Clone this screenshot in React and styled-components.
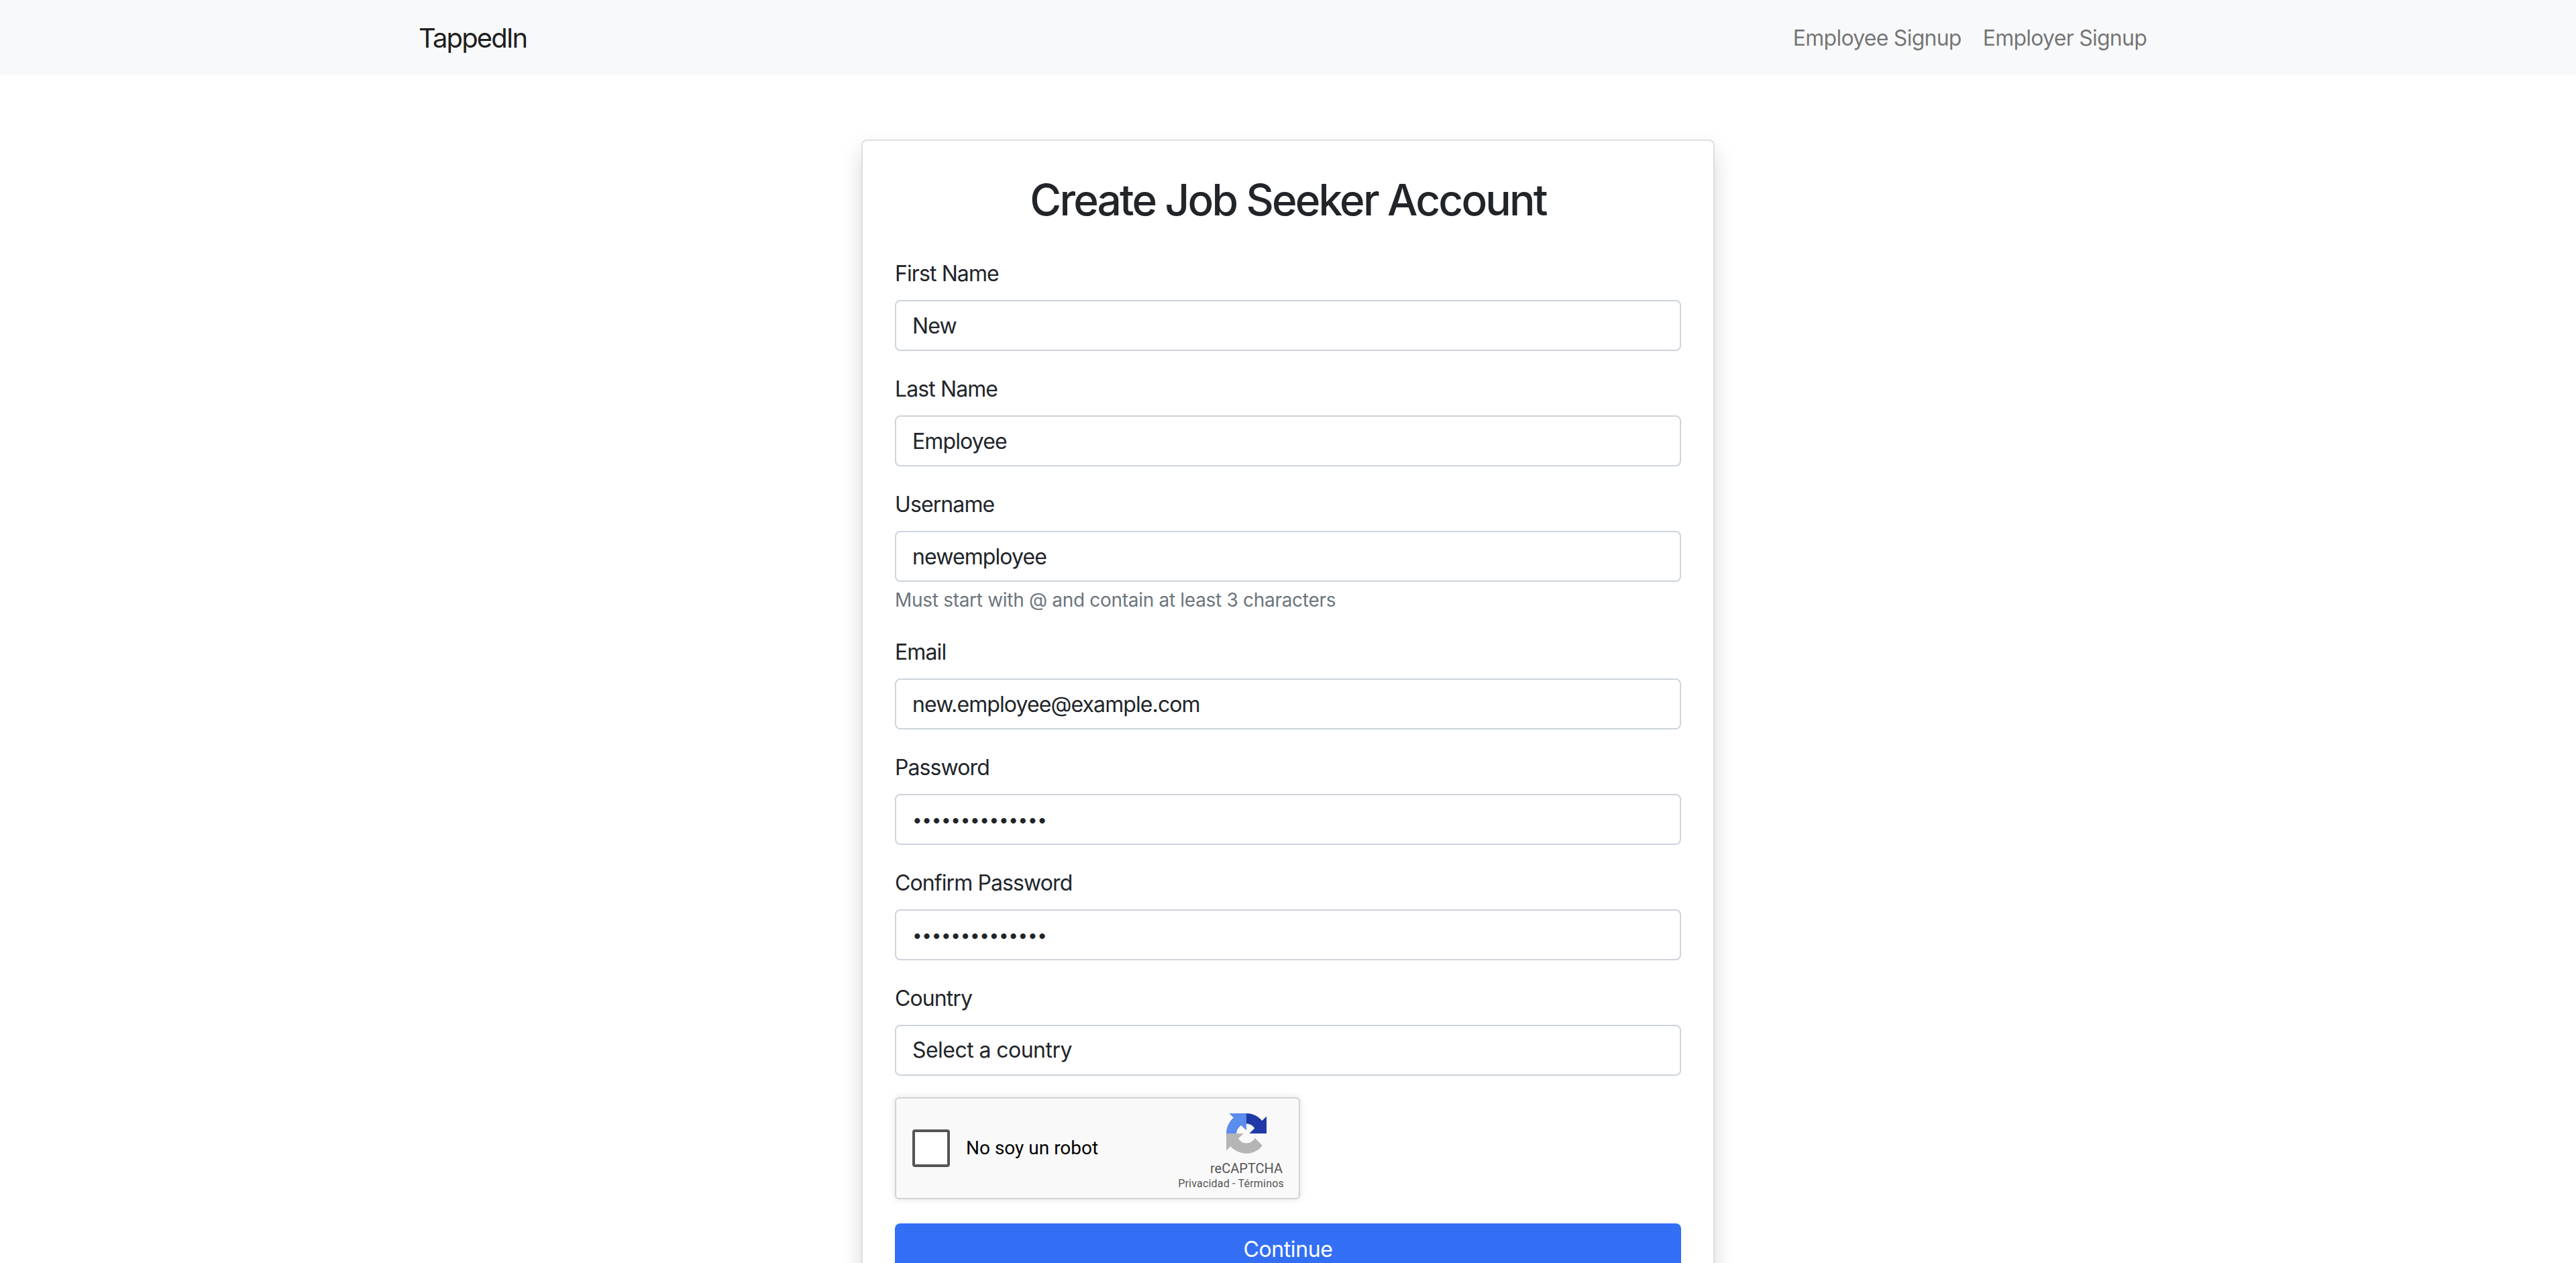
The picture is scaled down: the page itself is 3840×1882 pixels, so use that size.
import styled, { createGlobalStyle } from "styled-components";

const GlobalStyle = createGlobalStyle`
  * {
    box-sizing: border-box;
  }
  html,
  body {
    margin: 0;
    height: 1882px;
    overflow: hidden;
    background: #fff;
    color: #212529;
    font-family: Inter, "Liberation Sans", sans-serif;
    font-size: 32px;
    line-height: 1.5;
    letter-spacing: -0.9px;
  }
`;

const Navbar = styled.nav`
  background: #f8f9fa;
  padding: 16px 0;
`;

const NavContainer = styled.div`
  width: 2640px;
  margin: 0 auto;
  padding: 0 24px;
  display: flex;
  align-items: center;
  justify-content: space-between;
`;

const Brand = styled.a`
  font-size: 40px;
  padding: 11px 0 9px;
  color: rgba(0, 0, 0, 0.9);
  letter-spacing: -1.9px;
`;

const NavLinks = styled.div`
  display: flex;
`;

const NavLink = styled.a`
  padding: 17px 16px 15px;
  color: rgba(0, 0, 0, 0.55);
  letter-spacing: -0.75px;
`;

const Main = styled.main`
  display: flex;
  justify-content: center;
  padding-top: 96px;
`;

const Card = styled.div`
  width: 1272px;
  padding: 48px;
  background: #fff;
  border: 2px solid rgba(0, 0, 0, 0.125);
  border-radius: 8px;
  box-shadow: 0 16px 32px rgba(0, 0, 0, 0.15);
`;

const Title = styled.h2`
  margin: 0 0 48px;
  padding-top: 2px;
  height: 77px;
  font-size: 64px;
  font-weight: 500;
  line-height: 1.2;
  text-align: center;
  letter-spacing: -2.8px;
`;

const Field = styled.div`
  margin-bottom: 32px;
`;

const Label = styled.label`
  display: block;
  margin-bottom: 16px;
  padding-top: 1px;
  height: 48px;
`;

const Input = styled.input`
  display: block;
  width: 100%;
  height: 76px;
  padding: 12px 24px;
  font: inherit;
  letter-spacing: inherit;
  color: #212529;
  background: #fff;
  border: 2px solid #ced4da;
  border-radius: 8px;
  outline: none;

  &[type="password"] {
    font-size: 26px;
    letter-spacing: -0.3px;
  }
`;

const Select = styled(Input).attrs({ as: "select" })`
  appearance: none;
  letter-spacing: -0.55px;
`;

const Hint = styled.div`
  margin-top: 6px;
  font-size: 28px;
  line-height: 42px;
  letter-spacing: -0.3px;
  color: #6c757d;
`;

const Captcha = styled.div`
  display: flex;
  align-items: center;
  justify-content: space-between;
  width: 604px;
  height: 152px;
  margin-bottom: 36px;
  padding: 0 22px 0 24px;
  background: #f9f9f9;
  border: 2px solid #d3d3d3;
  border-radius: 6px;
  box-shadow: 0 0 8px 2px rgba(0, 0, 0, 0.08);
  font-family: Roboto, sans-serif;
  letter-spacing: 0;
`;

const CaptchaCheck = styled.div`
  display: flex;
  align-items: center;
  gap: 24px;
  font-size: 28px;
  color: #000;
`;

const CheckBox = styled.span`
  width: 56px;
  height: 56px;
  background: #fff;
  border: 4px solid #555;
  border-radius: 4px;
`;

const CaptchaBrand = styled.div`
  display: flex;
  flex-direction: column;
  align-items: flex-end;
  padding-top: 10px;
  color: #555;
`;

const LogoBlock = styled.div`
  display: flex;
  flex-direction: column;
  align-items: center;
  margin-right: 2px;
  font-size: 20px;
  line-height: 26px;
`;

const CaptchaLogo = styled.svg`
  display: block;
  width: 60px;
  height: 60px;
  margin-bottom: 9px;
`;

const CaptchaLinks = styled.div`
  font-size: 16px;
  line-height: 20px;
  letter-spacing: 0.2px;
`;

const Button = styled.button`
  display: block;
  width: 100%;
  height: 76px;
  padding: 13px 24px 11px;
  font: inherit;
  letter-spacing: -0.4px;
  color: #fff;
  background: #336ff5;
  border: none;
  border-radius: 8px;
`;

const fields = [
  { label: "First Name", value: "New" },
  { label: "Last Name", value: "Employee" },
  {
    label: "Username",
    value: "newemployee",
    hint: "Must start with @ and contain at least 3 characters",
  },
  { label: "Email", value: "new.employee@example.com" },
  { label: "Password", value: "password123456", type: "password" },
  { label: "Confirm Password", value: "password123456", type: "password" },
];

const App = () => {
  return (
    <>
      <GlobalStyle />
      <Navbar>
        <NavContainer>
          <Brand>TappedIn</Brand>
          <NavLinks>
            <NavLink>Employee Signup</NavLink>
            <NavLink>Employer Signup</NavLink>
          </NavLinks>
        </NavContainer>
      </Navbar>
      <Main>
        <Card>
          <Title>Create Job Seeker Account</Title>
          {fields.map((f) => (
            <Field key={f.label}>
              <Label>{f.label}</Label>
              <Input type={f.type || "text"} defaultValue={f.value} readOnly />
              {f.hint && <Hint>{f.hint}</Hint>}
            </Field>
          ))}
          <Field>
            <Label>Country</Label>
            <Select defaultValue="">
              <option value="">Select a country</option>
            </Select>
          </Field>
          <Captcha>
            <CaptchaCheck>
              <CheckBox />
              No soy un robot
            </CaptchaCheck>
            <CaptchaBrand>
              <LogoBlock>
                <CaptchaLogo viewBox="0 0 64 64">
                  <path
                    d="M64 31.955l-.033-1.37V4.687l-7.16 7.16C50.948 4.674 42.033.093 32.05.093c-10.4 0-19.622 4.96-25.458 12.64l11.736 11.86a15.55 15.55 0 0 1 4.754-5.334c2.05-1.6 4.952-2.906 8.968-2.906.485 0 .86.057 1.135.163 4.976.393 9.288 3.14 11.828 7.124l-8.307 8.307 32.297.006"
                    fill="#1f3aa6"
                  />
                  <path
                    d="M31.862.001l-1.37.033H4.594l7.16 7.16C4.58 13.053 0 21.968 0 31.95c0 10.4 4.96 19.622 12.64 25.458L24.5 45.672a15.55 15.55 0 0 1-5.334-4.754c-1.6-2.05-2.906-4.952-2.906-8.968 0-.485.057-.86.163-1.135.393-4.976 3.14-9.288 7.124-11.828l8.307 8.307.006-32.297"
                    fill="#5b8def"
                  />
                  <path
                    d="M.001 31.95l.033 1.37v25.898l7.16-7.16c5.86 7.173 14.775 11.754 24.76 11.754 10.4 0 19.622-4.96 25.458-12.64l-11.736-11.86a15.55 15.55 0 0 1-4.754 5.334c-2.05 1.6-4.952 2.906-8.968 2.906-.485 0-.86-.057-1.135-.163-4.976-.393-9.288-3.14-11.828-7.124l8.307-8.307-32.297-.006"
                    fill="#b5b5b5"
                  />
                </CaptchaLogo>
                reCAPTCHA
              </LogoBlock>
              <CaptchaLinks>Privacidad - Términos</CaptchaLinks>
            </CaptchaBrand>
          </Captcha>
          <Button>Continue</Button>
        </Card>
      </Main>
    </>
  );
};

export default App;
